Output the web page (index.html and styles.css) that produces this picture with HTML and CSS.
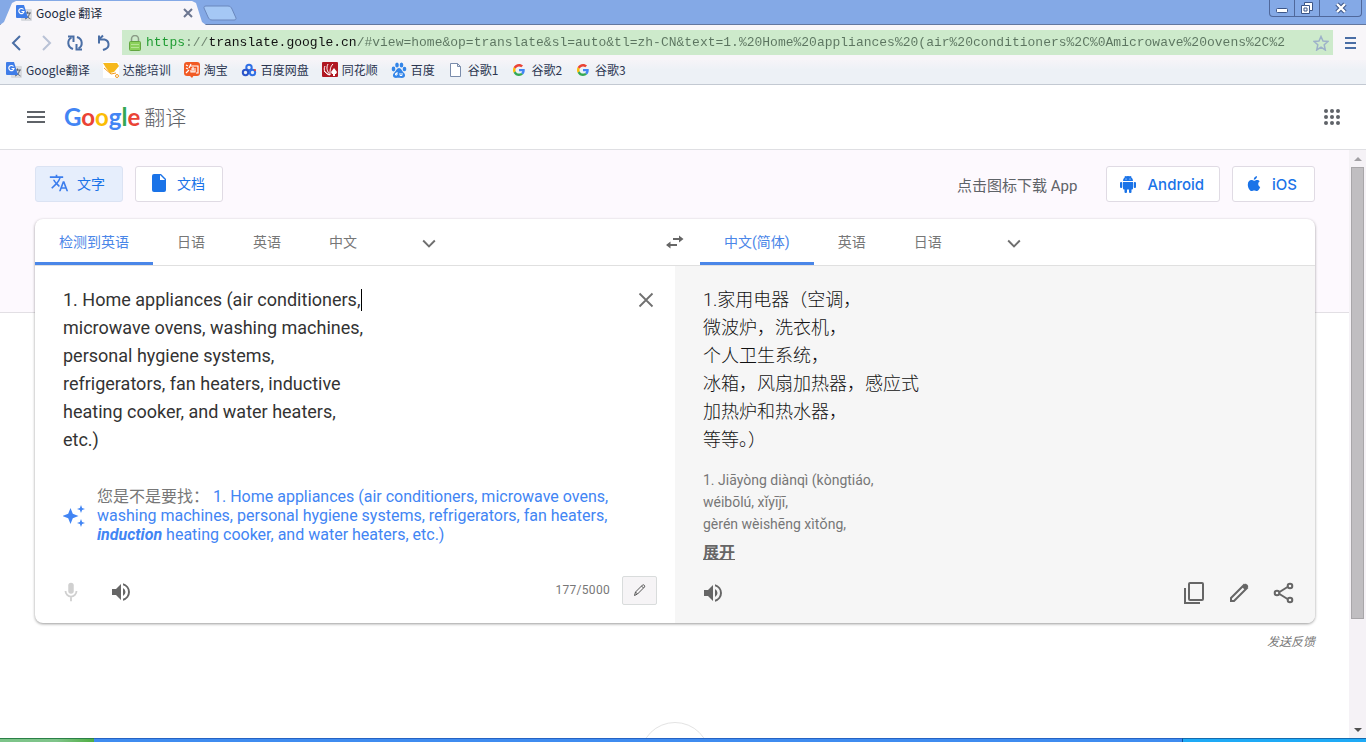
FILE: index.html
```html
<!DOCTYPE html>
<html lang="zh-CN">
<head>
    <meta charset="UTF-8">
    <meta name="viewport" content="width=device-width, initial-scale=1.0">
    <title>Google 翻译</title>
    <link rel="stylesheet" href="styles.css">
</head>
<body>
    <svg class="defs" aria-hidden="true">
        <symbol id="translate" viewBox="0 0 16 16">
            <rect x="5" y="4" width="11" height="12" rx="1" fill="#d9dbe0"/>
            <path d="M8 8h7M11.5 6.500v2M9 14c3-1 4-3 4.500-6M10 10c1 2 3 3 4.500 4" stroke="#5b6470" fill="none"/>
            <path d="M1 0h7l4 13H1a1 1 0 0 1-1-1V1a1 1 0 0 1 1-1z" fill="#3f7de8"/>
            <path d="M7.500 4.500A2.600 2.600 0 1 0 8 6.500H5.500" stroke="#fff" stroke-width="1.200" fill="none"/>
        </symbol>
        <symbol id="google-g" viewBox="0 0 48 48">
            <path fill="#EA4335" d="M24 9.500c3.540 0 6.710 1.220 9.210 3.600l6.850-6.850C35.900 2.380 30.470 0 24 0 14.620 0 6.510 5.380 2.560 13.220l7.980 6.190C12.430 13.720 17.740 9.500 24 9.500z"/>
            <path fill="#4285F4" d="M46.980 24.550c0-1.570-.15-3.090-.38-4.550H24v9.020h12.940c-.58 2.960-2.260 5.480-4.780 7.180l7.730 6c4.510-4.180 7.090-10.360 7.090-17.650z"/>
            <path fill="#FBBC05" d="M10.530 28.590A14.500 14.500 0 0 1 9.770 24c0-1.600.27-3.140.76-4.590l-7.980-6.190A23.900 23.900 0 0 0 0 24c0 3.880.92 7.540 2.560 10.780z"/>
            <path fill="#34A853" d="M24 48c6.480 0 11.930-2.130 15.890-5.810l-7.730-6c-2.150 1.450-4.920 2.300-8.160 2.300-6.260 0-11.570-4.220-13.470-9.910l-7.980 6.190C6.510 42.620 14.620 48 24 48z"/>
        </symbol>
        <symbol id="chevron" viewBox="0 0 24 24">
            <path d="M5 9l7 7 7-7" stroke="#707070" stroke-width="2.300" fill="none"/>
        </symbol>
        <symbol id="speaker" viewBox="0 0 24 24">
            <path fill="#666" d="M3 9v6h4l5 5V4L7 9H3zm13.500 3A4.500 4.500 0 0 0 14 7.970v8.050A4.500 4.500 0 0 0 16.500 12zM14 3.230v2.060a7 7 0 0 1 0 13.420v2.060a9 9 0 0 0 0-17.540z"/>
        </symbol>
    </svg>

    <div class="titlebar">
        <div class="tab">
            <svg class="icon16"><use href="#translate"/></svg>
            <span class="tab-title">Google 翻译</span>
            <button class="tab-close" aria-label="关闭标签页"><svg width="10" height="10" viewBox="0 0 10 10"><path d="M1 1l8 8M9 1L1 9" stroke="#6c7690" stroke-width="2"/></svg></button>
        </div>
        <button class="new-tab" aria-label="新标签页"><svg width="34" height="16" viewBox="0 0 34 16"><path d="M3 1h22c2 0 3 1 4 3l4 9c0 1 0 2-2 2H9c-2 0-3-1-4-3L1 3c0-1 0-2 2-2z" fill="#a5c8f5" stroke="#6a87bd"/></svg></button>
        <div class="window-buttons">
            <button aria-label="最小化"><svg width="14" height="14" viewBox="0 0 14 14"><rect x="1.500" y="7.500" width="11" height="4" rx="1" fill="#fff" stroke="#3c5688"/></svg></button>
            <button aria-label="还原"><svg width="14" height="14" viewBox="0 0 14 14"><path d="M4.500 1.500h8v8h-3v3h-8v-8h3z" fill="#fff" stroke="#3c5688"/><path d="M4.500 4.500h5v5M4 7h3v3H4z" fill="none" stroke="#3c5688"/></svg></button>
            <button class="window-close" aria-label="关闭"><svg width="14" height="14" viewBox="0 0 14 14"><path d="M3 3l8 8M11 3l-8 8" stroke="#3c5688" stroke-width="4.500"/><path d="M3 3l8 8M11 3l-8 8" stroke="#fff" stroke-width="2.400"/></svg></button>
        </div>
    </div>

    <div class="toolbar">
        <button aria-label="后退"><svg width="16" height="18" viewBox="0 0 16 18"><path d="M11 2L4 9l7 7" fill="none" stroke="#4a6ea5" stroke-width="2"/></svg></button>
        <button aria-label="前进"><svg width="16" height="18" viewBox="0 0 16 18"><path d="M5 2l7 7-7 7" fill="none" stroke="#b9c2d6" stroke-width="2"/></svg></button>
        <button aria-label="刷新"><svg width="18" height="18" viewBox="0 0 18 18"><path d="M7 15C1 13 1 6 5.500 3.500M11 3c6 2 6 9 1.500 11.500" fill="none" stroke="#4a6ea5" stroke-width="2"/><path d="M2 2.500h5.500V8M16 15.500h-5.500V10" fill="none" stroke="#4a6ea5" stroke-width="2"/></svg></button>
        <button aria-label="撤销"><svg width="18" height="18" viewBox="0 0 18 18"><path d="M3 5.500h6.500a5 5 0 0 1 1 9.500L8 16" fill="none" stroke="#4a6ea5" stroke-width="2"/><path d="M4 1.500v8M3.500 6L8 1.500" fill="none" stroke="#4a6ea5" stroke-width="2"/></svg></button>
        <div class="omnibox">
            <svg width="12" height="16" viewBox="0 0 12 16"><path d="M2.500 8V4a3.500 3.500 0 0 1 7 0v4" fill="none" stroke="#8a9a86" stroke-width="1.500"/><rect x="0.500" y="6.500" width="11" height="9" rx="1" fill="#8bd05b" stroke="#63a640"/><path d="M2 9.500h8M2 12.500h8" stroke="#b6e594"/></svg>
            <input class="url" type="text" aria-label="网址" value="https://translate.google.cn/#view=home&amp;op=translate&amp;sl=auto&amp;tl=zh-CN&amp;text=1.%20Home%20appliances%20(air%20conditioners%2C%0Amicrowave%20ovens%2C%2">
            <button aria-label="收藏"><svg width="16" height="16" viewBox="0 0 16 16"><path d="M8 1.500l2 4.500 5 .5-3.800 3.300L12.300 15 8 12.200 3.700 15l1.100-5.200L1 6.500 6 6z" fill="none" stroke="#9db1c9" stroke-width="1.500"/></svg></button>
        </div>
        <button aria-label="菜单"><svg width="12" height="14" viewBox="0 0 12 14"><path d="M0 2h11M0 7h11M0 12h11" stroke="#4a6ea5" stroke-width="2"/></svg></button>
    </div>

    <nav class="bookmarks">
        <a href="#"><svg class="icon16"><use href="#translate"/></svg>Google翻译</a>
        <a href="#"><svg class="icon16" viewBox="0 0 16 16"><rect width="16" height="16" fill="#fff"/><path d="M0 1h14l2 3-5 6-4 1-4-5z" fill="#f6b81c"/><path d="M1 6l7 6 5-1" stroke="#f29a1f" fill="none"/><circle cx="14" cy="14" r="1.500" fill="none" stroke="#f29a1f"/></svg>达能培训</a>
        <a href="#"><svg class="icon16" viewBox="0 0 16 16"><rect width="16" height="14" rx="3" fill="#f15a24"/><path d="M5 13l3 3 2-3z" fill="#f15a24"/><path d="M2 3l2 1M2 6l2 1M2 11l3-3M7 2L5 6M6 4h8v7h-2M7 7h5M9 5v5M7 8v2h4V8" stroke="#fff" stroke-width="1.200" fill="none"/></svg>淘宝</a>
        <a href="#"><svg class="icon16" viewBox="0 0 16 16"><g fill="none" stroke-width="2"><circle cx="8" cy="5.500" r="2.700" stroke="#2f6fe6"/><circle cx="4.500" cy="10.500" r="2.700" stroke="#2b55c9"/><circle cx="11.500" cy="10.500" r="2.700" stroke="#2f6fe6"/></g><circle cx="14" cy="8" r="1" fill="#e64040"/></svg>百度网盘</a>
        <a href="#"><svg class="icon16" viewBox="0 0 16 16"><rect width="16" height="15" rx="1" fill="#b01822"/><path d="M8 13C3 12 1 8 3 4M8 13C5 9 4 6 6 2M8 13C8 8 8 5 11 2M2 9l5 4" stroke="#fff" fill="none"/><path d="M12 6l3 4-1 2h-1v2h-2v-2h-1l-1-2z" fill="#fff"/></svg>同花顺</a>
        <a href="#"><svg class="icon16" viewBox="0 0 16 16" fill="#3385e8"><ellipse cx="2.500" cy="7" rx="1.800" ry="2.400"/><ellipse cx="6" cy="3" rx="1.800" ry="2.500"/><ellipse cx="10.500" cy="3" rx="1.800" ry="2.500"/><ellipse cx="13.500" cy="7" rx="1.800" ry="2.300"/><path d="M8 6c2 0 3 3 5 5s1 5-2 5c-2 0-4-.5-6 0-3 0-4-3-2-5s3-5 5-5z"/><path d="M6 10v3H4.500v-1.500H6M9 11v2.500h2V11" stroke="#fff" fill="none"/></svg>百度</a>
        <a href="#"><svg class="icon16" viewBox="0 0 16 16"><path d="M2.500 1.500h7l3 3v10h-10zM9.500 1.500v3h3" fill="#fff" stroke="#7a8cab"/></svg>谷歌1</a>
        <a href="#"><svg class="icon16 g"><use href="#google-g"/></svg>谷歌2</a>
        <a href="#"><svg class="icon16 g"><use href="#google-g"/></svg>谷歌3</a>
    </nav>

    <header class="app-header">
        <button aria-label="主菜单"><svg width="24" height="24" viewBox="0 0 24 24"><path d="M3 7h18M3 12h18M3 17h18" stroke="#5f6368" stroke-width="2"/></svg></button>
        <a class="logo" href="#"><span class="google"><span class="blue">G</span><span class="red">o</span><span class="yellow">o</span><span class="blue">g</span><span class="green">l</span><span class="red">e</span></span><span class="product">翻译</span></a>
        <button aria-label="Google 应用"><svg width="20" height="20" viewBox="0 0 20 20" fill="#5f6368"><circle cx="4" cy="4" r="2"/><circle cx="10" cy="4" r="2"/><circle cx="16" cy="4" r="2"/><circle cx="4" cy="10" r="2"/><circle cx="10" cy="10" r="2"/><circle cx="16" cy="10" r="2"/><circle cx="4" cy="16" r="2"/><circle cx="10" cy="16" r="2"/><circle cx="16" cy="16" r="2"/></svg></button>
    </header>

    <div class="viewport">
        <main>
            <div class="modes">
                <button class="chip selected"><svg width="20" height="20" viewBox="0 0 24 24" fill="#3b7ded"><path d="M12.870 15.070l-2.540-2.510.03-.03A17.500 17.500 0 0 0 14.070 6H17V4h-7V2H8v2H1v2h11.170C11.500 7.920 10.440 9.750 9 11.350 8.070 10.320 7.300 9.190 6.690 8h-2c.73 1.630 1.730 3.170 2.980 4.560l-5.090 5.020L4 19l5-5 3.110 3.110zM18.500 10h-2L12 22h2l1.120-3h4.750L21 22h2zm-2.620 7l1.620-4.330L19.120 17z"/></svg>文字</button>
                <button class="chip"><svg width="20" height="20" viewBox="0 0 20 20"><path d="M5 1h7l5 5v11a2 2 0 0 1-2 2H5a2 2 0 0 1-2-2V3a2 2 0 0 1 2-2z" fill="#1a73e8"/><path d="M11 2v5h5z" fill="#fff"/></svg>文档</button>
                <span class="app-hint">点击图标下载 App</span>
                <a class="chip store" href="#"><svg width="16" height="18" viewBox="0 0 16 18" fill="#1a73e8"><path d="M3 6a5 5 0 0 1 10 0zM3 7h10v6.500a1 1 0 0 1-1 1H4a1 1 0 0 1-1-1z"/><path d="M5 1l1.200 2M11 1L9.800 3" stroke="#1a73e8"/><rect y="7" width="2.300" height="6" rx="1"/><rect x="13.700" y="7" width="2.300" height="6" rx="1"/><rect x="4.500" y="12" width="2.500" height="6" rx="1"/><rect x="9" y="12" width="2.500" height="6" rx="1"/><circle cx="6" cy="4" r=".6" fill="#fff"/><circle cx="10" cy="4" r=".6" fill="#fff"/></svg>Android</a>
                <a class="chip store ios" href="#"><svg width="14" height="16" viewBox="0 0 14 16" fill="#1a73e8"><path d="M10 0c.2 2-1.400 3.700-3.200 3.700C6.600 2 8.200.3 10 0zM12.800 5.300c-2.200 1.400-2 4.600.4 5.700-.7 2-2 4-3.400 4-1 0-1.500-.6-2.600-.6s-1.700.6-2.600.6C2.700 15 .8 11.600.8 8.700c0-3 1.800-4.600 3.500-4.600 1.100 0 2 .7 2.700.7.600 0 1.700-.8 3.100-.8 1 0 2 .4 2.700 1.300z"/></svg>iOS</a>
            </div>

            <section class="card">
                <div class="languages">
                    <div class="tabs">
                        <button class="active">检测到英语</button>
                        <button>日语</button>
                        <button>英语</button>
                        <button>中文</button>
                        <button class="more" aria-label="更多语言"><svg width="20" height="20"><use href="#chevron"/></svg></button>
                    </div>
                    <button class="swap" aria-label="切换语言"><svg width="20" height="20" viewBox="0 0 20 20"><path d="M8 7h7M12 13H5" stroke="#666" stroke-width="2"/><path d="M14 3.500L18.500 7 14 10.500zM5.500 9.500L1 13l4.500 3.500z" fill="#666"/></svg></button>
                    <div class="tabs">
                        <button class="active">中文(简体)</button>
                        <button>英语</button>
                        <button>日语</button>
                        <button class="more" aria-label="更多语言"><svg width="20" height="20"><use href="#chevron"/></svg></button>
                    </div>
                </div>

                <div class="panes">
                    <div class="pane source">
                        <div class="entry">
                            <textarea class="source-text" rows="6" aria-label="原文" spellcheck="false">1. Home appliances (air conditioners,
microwave ovens, washing machines,
personal hygiene systems,
refrigerators, fan heaters, inductive
heating cooker, and water heaters,
etc.)</textarea>
                            <span class="caret"></span>
                            <button class="clear" aria-label="清除原文"><svg width="16" height="16" viewBox="0 0 16 16"><path d="M1.500 1.500l13 13M14.500 1.500l-13 13" stroke="#707070" stroke-width="1.800"/></svg></button>
                        </div>
                        <div class="suggestion">
                            <svg width="22" height="22" viewBox="0 0 22 22" fill="#4285f4"><path d="M7.500 3l2.300 5.700L15.500 11l-5.700 2.300L7.500 19l-2.300-5.700L-.5 11l5.700-2.300zM18 0l1.100 2.900L22 4l-2.900 1.100L18 8l-1.100-2.900L14 4l2.900-1.100zM18 14l1.100 2.900L22 18l-2.900 1.100L18 22l-1.100-2.900L14 18l2.900-1.100z"/></svg>
                            <p>您是不是要找： <a href="#">1. Home appliances (air conditioners, microwave ovens, washing machines, personal hygiene systems, refrigerators, fan heaters, <b>induction</b> heating cooker, and water heaters, etc.)</a></p>
                        </div>
                        <div class="actions">
                            <button class="voice" aria-label="语音输入" disabled><svg width="22" height="22" viewBox="0 0 24 24"><path d="M12 14a3 3 0 0 0 3-3V5a3 3 0 0 0-6 0v6a3 3 0 0 0 3 3z" fill="#d0d0d0"/><path d="M6 11a6 6 0 0 0 12 0M12 17v5" fill="none" stroke="#d0d0d0" stroke-width="2"/></svg></button>
                            <button class="voice" aria-label="收听原文"><svg width="24" height="24"><use href="#speaker"/></svg></button>
                            <span class="count">177/5000</span>
                            <button class="ime" aria-label="手写输入"><svg width="14" height="14" viewBox="0 0 14 14"><path d="M1.500 12.500l1-3.500 7-7c1-1 3 1 2 2l-7 7zM2.500 9l2 2M8.500 3l2 2" fill="none" stroke="#555"/></svg></button>
                        </div>
                    </div>

                    <div class="pane target">
                        <p class="translation">1.家用电器（空调，<br>微波炉，洗衣机，<br>个人卫生系统，<br>冰箱，风扇加热器，感应式<br>加热炉和热水器，<br>等等。）</p>
                        <p class="pinyin">1. Jiāyòng diànqì (kòngtiáo,<br>wéibōlú, xǐyījī,<br>gèrén wèishēng xìtǒng,</p>
                        <a class="expand" href="#">展开</a>
                        <div class="actions">
                            <button class="listen" aria-label="收听译文"><svg width="24" height="24"><use href="#speaker"/></svg></button>
                            <button aria-label="复制译文"><svg width="24" height="24" viewBox="0 0 24 24" fill="none" stroke="#666" stroke-width="2"><rect x="7" y="2" width="14" height="17" rx="1"/><path d="M3 7v15h15"/></svg></button>
                            <button aria-label="修改建议"><svg width="24" height="24" viewBox="0 0 24 24"><path d="M4 20v-3L17 4l3 3L7 20z" fill="none" stroke="#666" stroke-width="2"/><path d="M15 6l3-3c1-1 4 2 3 3l-3 3z" fill="#666"/></svg></button>
                            <button aria-label="分享译文"><svg width="24" height="24" viewBox="0 0 24 24" fill="none" stroke="#666" stroke-width="2"><path d="M7.500 11l8-5M7.500 13l8 5"/><circle cx="5" cy="12" r="2.300"/><circle cx="18" cy="5" r="2.300"/><circle cx="18" cy="19" r="2.300"/></svg></button>
                        </div>
                    </div>
                </div>
            </section>
            <a class="feedback" href="#">发送反馈</a>
            <div class="history"><span class="circle"></span></div>
        </main>

        <div class="scrollbar">
            <span class="arrow up"></span>
            <span class="thumb"></span>
            <span class="rest"></span>
            <span class="arrow down"></span>
        </div>
    </div>

    <div class="taskbar"><span class="start"></span><span class="tasks"></span><span class="tray"></span></div>
</body>
</html>
```

FILE: styles.css
```css
* {
    box-sizing: border-box;
}
body {
    margin: 0;
    height: 100vh;
    display: flex;
    flex-direction: column;
    overflow: hidden;
    font-family: Roboto, "Noto Sans CJK SC", sans-serif;
    background: #fff;
    color: #222;
}
button {
    display: inline-flex;
    align-items: center;
    justify-content: center;
    padding: 0;
    border: none;
    background: none;
    font-family: inherit;
    cursor: pointer;
}
a {
    text-decoration: none;
}
p {
    margin: 0;
}
svg {
    flex-shrink: 0;
}
.defs {
    position: absolute;
    width: 0;
    height: 0;
}
.icon16 {
    width: 16px;
    height: 16px;
}
.icon16.g {
    padding: 2px;
}

/* browser window */
.titlebar {
    display: flex;
    flex-shrink: 0;
    height: 25px;
    background: #84a9e6;
    border-bottom: 1px solid #62779f;
}
.tab {
    display: flex;
    align-items: center;
    gap: 4px;
    width: 206px;
    height: 25px;
    padding: 0 13px 0 16px;
    background: #f8f6fa;
    clip-path: polygon(0 100%, 4px 88%, 12px 12%, 16px 4%, 192px 4%, 196px 12%, 202px 88%, 100% 100%);
}
.tab-title {
    flex: 1;
    font-family: "Noto Sans CJK SC", sans-serif;
    font-size: 12px;
    line-height: 18px;
    color: #222b40;
}
.new-tab {
    margin-left: -3px;
    margin-top: 5px;
    height: 16px;
}
.window-buttons {
    display: flex;
    height: 17px;
    margin: 0 4px 0 auto;
    border: 1px solid #50689b;
    border-top: none;
    border-radius: 0 0 4px 4px;
}
.window-buttons button {
    width: 25px;
    border-right: 1px solid #50689b;
}
.window-buttons .window-close {
    width: 41px;
    border-right: none;
}
.toolbar {
    display: flex;
    flex-shrink: 0;
    align-items: center;
    gap: 7px;
    height: 35px;
    padding: 0 4px 0 6px;
    background: #f8f6f9;
}
.toolbar > button {
    width: 22px;
}
.omnibox {
    display: flex;
    flex: 1;
    align-items: center;
    gap: 5px;
    height: 25px;
    padding: 0 4px 0 7px;
    background: #cdeacb;
}
.url {
    flex: 1;
    min-width: 0;
    height: 24px;
    padding: 0;
    border: none;
    outline: none;
    font-family: "Liberation Mono", monospace;
    font-size: 13px;
    color: #5c7560;
    background: linear-gradient(to right, #1b9a2f 5ch, #6b806c 5ch, #6b806c 8ch, #111 8ch, #111 27ch, #5c7560 27ch);
    -webkit-background-clip: text;
    background-clip: text;
    -webkit-text-fill-color: transparent;
}
.bookmarks {
    display: flex;
    flex-shrink: 0;
    align-items: center;
    gap: 13px;
    height: 25px;
    padding: 0 6px 4px;
    background: linear-gradient(#f6f4f8, #edf1f6 40%);
    border-bottom: 1px solid #c3c9d2;
}
.bookmarks a {
    display: flex;
    align-items: center;
    gap: 4px;
    font-family: "Noto Sans CJK SC", sans-serif;
    font-size: 12px;
    line-height: 18px;
    color: #2b3550;
}

/* page header */
.app-header {
    display: flex;
    flex-shrink: 0;
    align-items: center;
    height: 65px;
    padding: 0 24px;
    border-bottom: 1px solid #dfdfe3;
}
.logo {
    display: flex;
    flex: 1;
    align-items: center;
    gap: 4px;
    margin-left: 16px;
    padding-bottom: 2px;
}
.google {
    font-family: Lato, sans-serif;
    font-size: 24px;
    font-weight: 700;
}
.blue {
    color: #4285f4;
}
.red {
    color: #ea4335;
}
.yellow {
    color: #fbbc05;
}
.green {
    color: #34a853;
}
.product {
    font-size: 21px;
    font-weight: 300;
    color: #5f6368;
}

/* content */
.viewport {
    display: flex;
    flex: 1;
    min-height: 0;
}
main {
    display: flex;
    flex: 1;
    flex-direction: column;
    padding: 16px 34px 0 35px;
    overflow: hidden;
    background: linear-gradient(#fdf9fe 162px, #e2dfe4 162px, #e2dfe4 163px, #fff 163px);
}
.modes {
    display: flex;
    align-items: center;
    gap: 12px;
}
.chip {
    display: flex;
    align-items: center;
    gap: 8px;
    height: 36px;
    padding: 0 17px 2px 13px;
    border: 1px solid #e0dbe4;
    border-radius: 3px;
    background: #fff;
    font-size: 14px;
    color: #1a73e8;
}
.chip.selected {
    background: #e6eefc;
    border-color: #dbe3f3;
}
.store {
    gap: 11px;
    padding: 0 15px 0 13px;
    font-family: Inter, sans-serif;
    font-size: 15px;
    font-weight: 500;
}
.ios {
    padding: 0 17px 0 14px;
}
.app-hint {
    margin-left: auto;
    margin-right: 17px;
    font-size: 15px;
    color: #5f6368;
}
.card {
    margin-top: 17px;
    border-radius: 8px;
    background: #fff;
    box-shadow: 0 1px 3px rgba(0, 0, 0, 0.4);
    overflow: hidden;
    flex-shrink: 0;
}
.languages {
    display: grid;
    grid-template-columns: 1fr 50px 1fr;
    height: 47px;
    border-bottom: 1px solid #e0e0e0;
}
.tabs {
    display: flex;
}
.tabs button {
    height: 46px;
    padding: 1px 24px 0;
    border-bottom: 3px solid transparent;
    font-size: 14px;
    color: #777;
}
.tabs .active {
    color: #4a86e8;
    border-color: #4a86e8;
}
.tabs .more {
    width: 96px;
    padding-top: 4px;
}
.panes {
    display: grid;
    grid-template-columns: 1fr 1fr;
}
.pane {
    display: flex;
    flex-direction: column;
    min-height: 357px;
    padding: 20px 18px 18px 28px;
}
.target {
    padding: 20px 19px 15px 28px;
    background: #f6f6f6;
}
.entry {
    position: relative;
    display: flex;
    align-items: flex-start;
}
.source-text {
    flex: 1;
    height: 168px;
    padding: 0;
    border: none;
    outline: none;
    resize: none;
    overflow: hidden;
    font-family: inherit;
    font-size: 18px;
    line-height: 28px;
    color: #333;
    background: none;
}
.caret {
    position: absolute;
    left: 298px;
    top: 3px;
    width: 1px;
    height: 22px;
    background: #000;
}
.clear {
    width: 22px;
    height: 28px;
}
.suggestion {
    display: flex;
    align-items: center;
    gap: 12px;
    margin-top: 33px;
    padding-right: 30px;
    font-size: 16px;
    line-height: 19px;
    color: #777;
}
.suggestion a {
    color: #4285f4;
}
.suggestion b {
    font-style: italic;
}
.actions {
    display: flex;
    align-items: center;
    height: 30px;
    margin-top: auto;
}
.source .actions {
    gap: 30px;
}
.source .voice {
    margin-left: -3px;
    padding-top: 4px;
}
.source .count {
    margin-left: auto;
    margin-right: -18px;
    font-size: 12px;
    letter-spacing: 0.3px;
    color: #777;
}
.source .ime {
    width: 35px;
    height: 29px;
    border: 1px solid #d9dcdc;
    border-radius: 2px;
    background: #f6f4f6;
}
.translation {
    font-size: 18px;
    font-weight: 300;
    line-height: 28px;
    color: #111;
}
.pinyin {
    margin-top: 15px;
    font-size: 14px;
    line-height: 22px;
    color: #777;
}
.expand {
    align-self: flex-start;
    margin-top: 7px;
    font-size: 16px;
    line-height: 22px;
    font-weight: 700;
    text-decoration: underline;
    color: #666;
}
.target .actions {
    gap: 21px;
}
.target .listen {
    margin-left: -2px;
    margin-right: auto;
}
.feedback {
    align-self: flex-end;
    margin-top: 10px;
    font-size: 12px;
    line-height: 18px;
    font-style: italic;
    color: #777;
}
.history {
    height: 16px;
    margin-top: auto;
    overflow: hidden;
}
.circle {
    display: block;
    width: 70px;
    height: 70px;
    margin: 0 auto;
    border: 1px solid #e3e3e3;
    border-radius: 50%;
}

/* scrollbar */
.scrollbar {
    display: flex;
    flex-direction: column;
    width: 17px;
    padding: 0 2px;
    background: #f5f2f6;
}
.arrow {
    display: flex;
    align-items: center;
    justify-content: center;
    height: 17px;
}
.arrow::before {
    content: "";
    border: 4px solid transparent;
}
.up::before {
    border-top: none;
    border-bottom-color: #a2a0a4;
}
.down::before {
    border-bottom: none;
    border-top-color: #505050;
}
.thumb {
    flex: 452;
    border: 1px solid #a8a6a9;
    background: #c0bec1;
}
.rest {
    flex: 102;
}

/* taskbar */
.taskbar {
    display: flex;
    flex-shrink: 0;
    height: 4px;
}
.start {
    width: 94px;
    background: linear-gradient(to right, #7cc489, #7fc48a 60%, #4fae42);
    border-top: 1px solid #2b8048;
}
.tasks {
    flex: 1;
    background: #3f8cf0;
    border-top: 1px solid #2663c4;
}
.tray {
    width: 184px;
    background: #1eaaf6;
    border-top: 1px solid #146cb0;
    border-left: 1px solid #0b4f9e;
}
```
